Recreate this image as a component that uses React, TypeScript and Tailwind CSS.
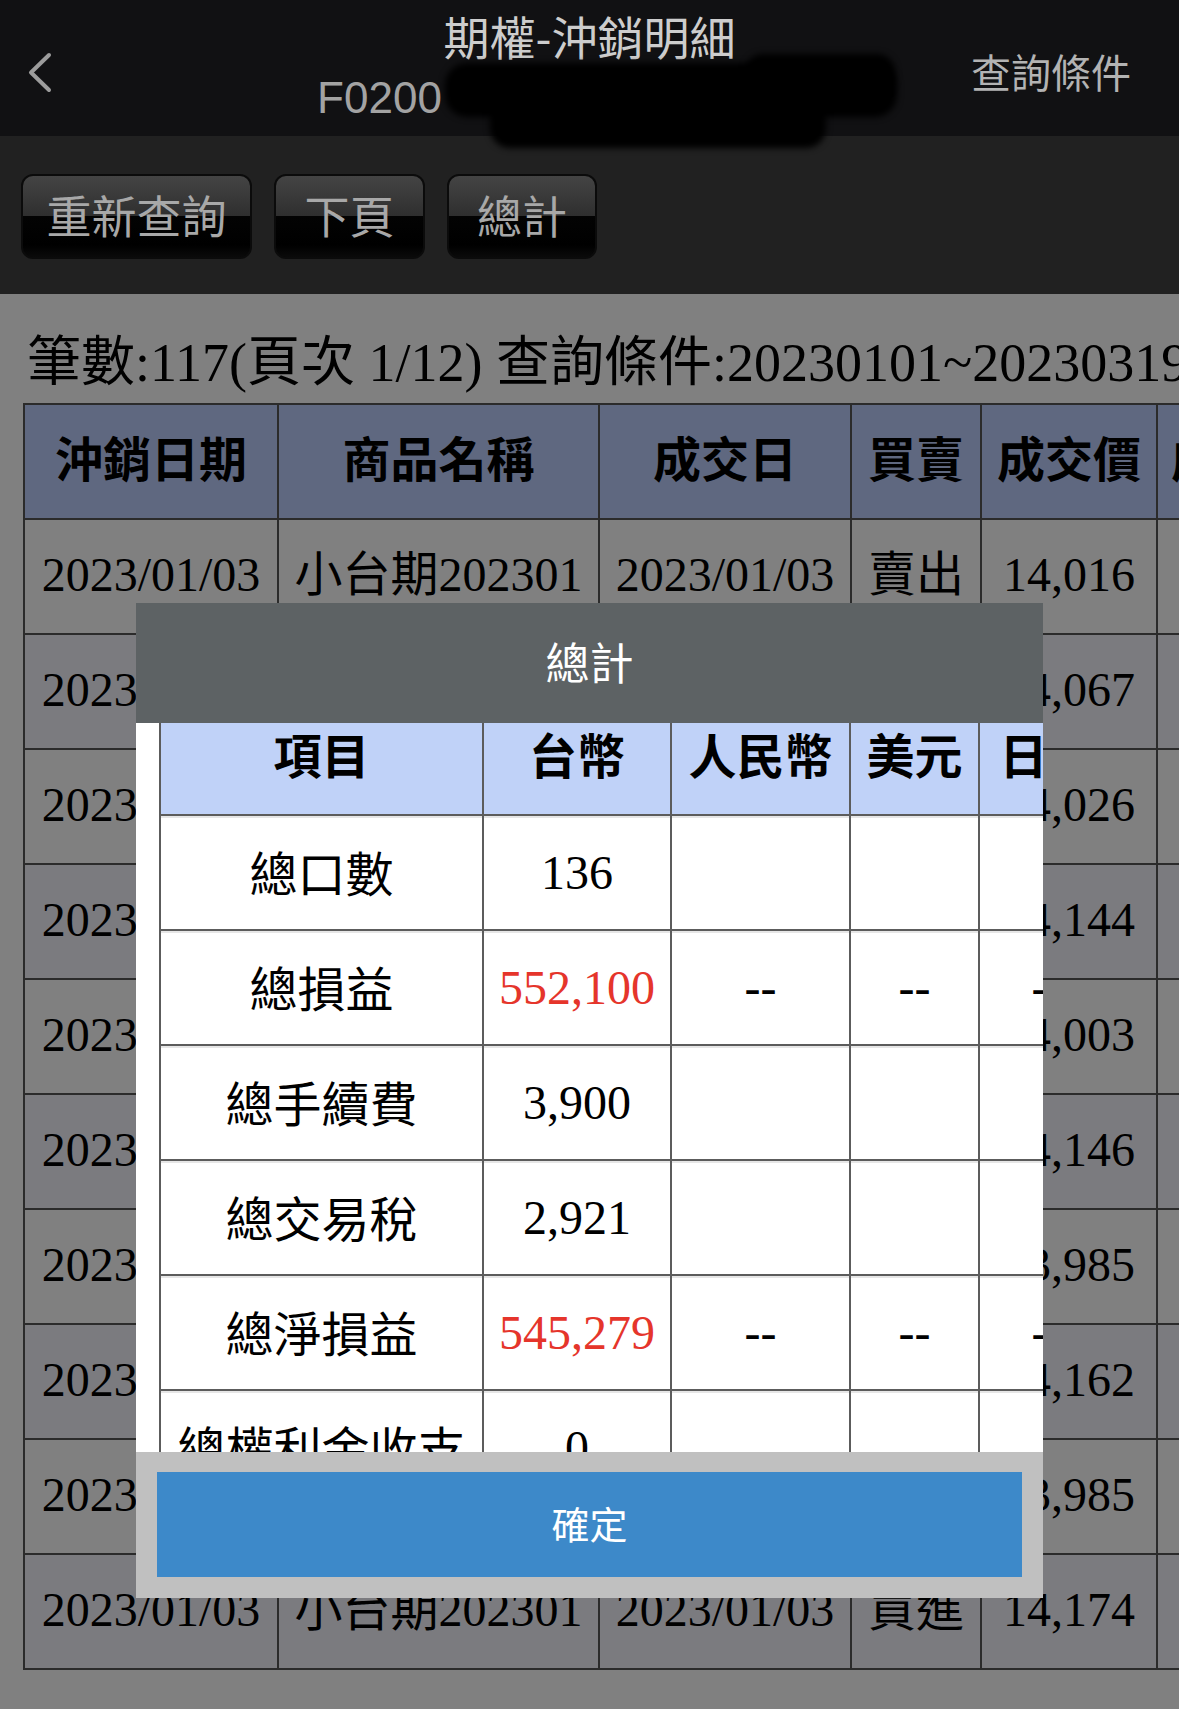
import React from "react";

const SANS = "font-['Noto_Sans_CJK_TC',sans-serif]";
const SERIF = "font-['Liberation_Serif','Noto_Sans_CJK_TC',serif]";

const TRADES = [
  { side: "賣出", price: "14,016" },
  { side: "買進", price: "14,067" },
  { side: "賣出", price: "14,026" },
  { side: "買進", price: "14,144" },
  { side: "賣出", price: "14,003" },
  { side: "買進", price: "14,146" },
  { side: "賣出", price: "13,985" },
  { side: "買進", price: "14,162" },
  { side: "賣出", price: "13,985" },
  { side: "買進", price: "14,174" },
];

const TOTALS = [
  { label: "總口數", twd: "136", red: false, other: "" },
  { label: "總損益", twd: "552,100", red: true, other: "--" },
  { label: "總手續費", twd: "3,900", red: false, other: "" },
  { label: "總交易稅", twd: "2,921", red: false, other: "" },
  { label: "總淨損益", twd: "545,279", red: true, other: "--" },
  { label: "總權利金收支", twd: "0", red: false, other: "" },
];

export default function App() {
  return (
    <div className="relative h-[1709px] w-[1179px] overflow-hidden bg-[#808080]">
      <NavBar />
      <Toolbar />

      <div className={`flex h-[109px] items-center whitespace-nowrap pl-[27px] pt-[28px] text-[54px] leading-none text-black ${SERIF}`}>
        筆數:117(頁次 1/12) 查詢條件:20230101~20230319
      </div>

      <div className="overflow-hidden pl-[23px]">
        <table className="w-[1353px] table-fixed border-collapse border-2 border-[#2b2b2b]">
          <colgroup>
            <col className="w-[254px]" />
            <col className="w-[321px]" />
            <col className="w-[252px]" />
            <col className="w-[130px]" />
            <col className="w-[176px]" />
            <col className="w-[220px]" />
          </colgroup>
          <thead>
            <tr className="h-[115px] bg-[#5f6880]">
              {["沖銷日期", "商品名稱", "成交日", "買賣", "成交價", "成交口數"].map((h) => (
                <th
                  key={h}
                  className={`whitespace-nowrap border-2 border-[#2b2b2b] px-0 pb-[12px] pt-0 text-center align-middle text-[48px] font-bold leading-none text-black ${SANS}`}
                >
                  {h}
                </th>
              ))}
            </tr>
          </thead>
          <tbody>
            {TRADES.map((t, i) => (
              <tr key={i} className={i % 2 === 0 ? "h-[115px] bg-[#808080]" : "h-[115px] bg-[#7b7b7f]"}>
                {["2023/01/03", "小台期202301", "2023/01/03", t.side, t.price, "1"].map((v, j) => (
                  <td
                    key={j}
                    className={`whitespace-nowrap border-2 border-[#2b2b2b] px-0 pb-[4px] pt-0 text-center align-middle text-[48px] leading-none text-black ${SERIF}`}
                  >
                    {v}
                  </td>
                ))}
              </tr>
            ))}
          </tbody>
        </table>
      </div>

      {/* redacted account number */}
      <div className="absolute left-[445px] top-[63px] h-[54px] w-[452px] rounded-[22px] bg-black blur-[3px]" />
      <div className="absolute left-[745px] top-[54px] h-[40px] w-[150px] rounded-[18px] bg-black blur-[3px]" />
      <div className="absolute left-[490px] top-[96px] h-[52px] w-[336px] rounded-[20px] bg-black blur-[3px]" />

      <TotalsDialog />
    </div>
  );
}

function NavBar() {
  return (
    <div className="grid h-[136px] grid-cols-[209px_1fr_209px] bg-[#111113]">
      <div className="pl-[27px] pt-[52px]">
        <svg width="25" height="41" viewBox="0 0 25 41" fill="none">
          <polyline points="22,3 4,20.5 22,38" stroke="#9c9c9c" strokeWidth="4" strokeLinecap="round" strokeLinejoin="round" />
        </svg>
      </div>
      <div className="flex flex-col items-center pt-[12px]">
        <div className={`h-[46px] whitespace-nowrap text-[46px] leading-none text-[#cdcdcd] ${SANS}`}>期權-沖銷明細</div>
        <div className="mt-[18px] flex h-[44px] items-start">
          <span className="font-['Liberation_Sans',sans-serif] text-[44px] leading-none text-[#a3a3a3]">F0200</span>
          <span className="w-[420px]" />
        </div>
      </div>
      <div className={`flex justify-end whitespace-nowrap pr-[48px] pt-[51px] text-[40px] leading-none text-[#b3b3b3] ${SANS}`}>查詢條件</div>
    </div>
  );
}

function Toolbar() {
  const buttons = [
    { label: "重新查詢", w: "w-[231px]" },
    { label: "下頁", w: "w-[151px]" },
    { label: "總計", w: "w-[150px]" },
  ];
  return (
    <div className="flex h-[158px] items-start gap-[22px] bg-[#212121] pl-[21px] pt-[38px]">
      {buttons.map((b) => (
        <div
          key={b.label}
          className={`${b.w} flex h-[85px] items-center justify-center rounded-[12px] border-2 border-[#0b0b0b] bg-[linear-gradient(to_bottom,#444444_0%,#2f2f2f_49%,#030303_50%,#000000_85%,#0a0a0a_100%)] pb-[4px] text-[45px] leading-none text-[#a8a8a8] ${SANS}`}
        >
          {b.label}
        </div>
      ))}
    </div>
  );
}

function TotalsDialog() {
  const cell = "whitespace-nowrap border-2 border-[#5c5c5c] p-0 text-center align-middle text-[48px] leading-none shadow-[inset_0_2px_0_#e6e6e6]";
  return (
    <div className="absolute left-[136px] top-[603px] flex h-[995px] w-[907px] flex-col">
      <div className={`flex h-[120px] items-center justify-center bg-[#5d6264] pb-[4px] text-[44px] leading-none text-white ${SANS}`}>總計</div>

      <div className="h-[729px] overflow-hidden bg-white pl-[23px]">
        <table className="w-[956px] table-fixed border-collapse">
          <colgroup>
            <col className="w-[323px]" />
            <col className="w-[188px]" />
            <col className="w-[179px]" />
            <col className="w-[129px]" />
            <col className="w-[137px]" />
          </colgroup>
          <thead>
            <tr className="h-[92px] bg-[#c0d2f8]">
              {["項目", "台幣", "人民幣", "美元", "日幣"].map((h) => (
                <th
                  key={h}
                  className={`whitespace-nowrap border-x-2 border-b-2 border-[#5c5c5c] px-0 pb-0 pt-[6px] text-center align-top text-[48px] font-bold leading-none text-black ${SANS}`}
                >
                  {h}
                </th>
              ))}
            </tr>
          </thead>
          <tbody>
            {TOTALS.map((r) => (
              <tr key={r.label} className="h-[115px]">
                <td className={`${cell} pb-[4px] text-[47px] text-black ${SANS}`}>{r.label}</td>
                <td className={`${cell} ${r.red ? "text-[#e5352b]" : "text-black"} ${SERIF}`}>{r.twd}</td>
                <td className={`${cell} text-black ${SERIF}`}>{r.other}</td>
                <td className={`${cell} text-black ${SERIF}`}>{r.other}</td>
                <td className={`${cell} text-black ${SERIF}`}>{r.other}</td>
              </tr>
            ))}
          </tbody>
        </table>
      </div>

      <div className="h-[146px] bg-[#c0c0c0] px-[21px] pb-[21px] pt-[20px]">
        <div className={`flex h-[105px] items-center justify-center bg-[#3d89c9] pb-[4px] text-[38px] leading-none text-white ${SANS}`}>確定</div>
      </div>
    </div>
  );
}
